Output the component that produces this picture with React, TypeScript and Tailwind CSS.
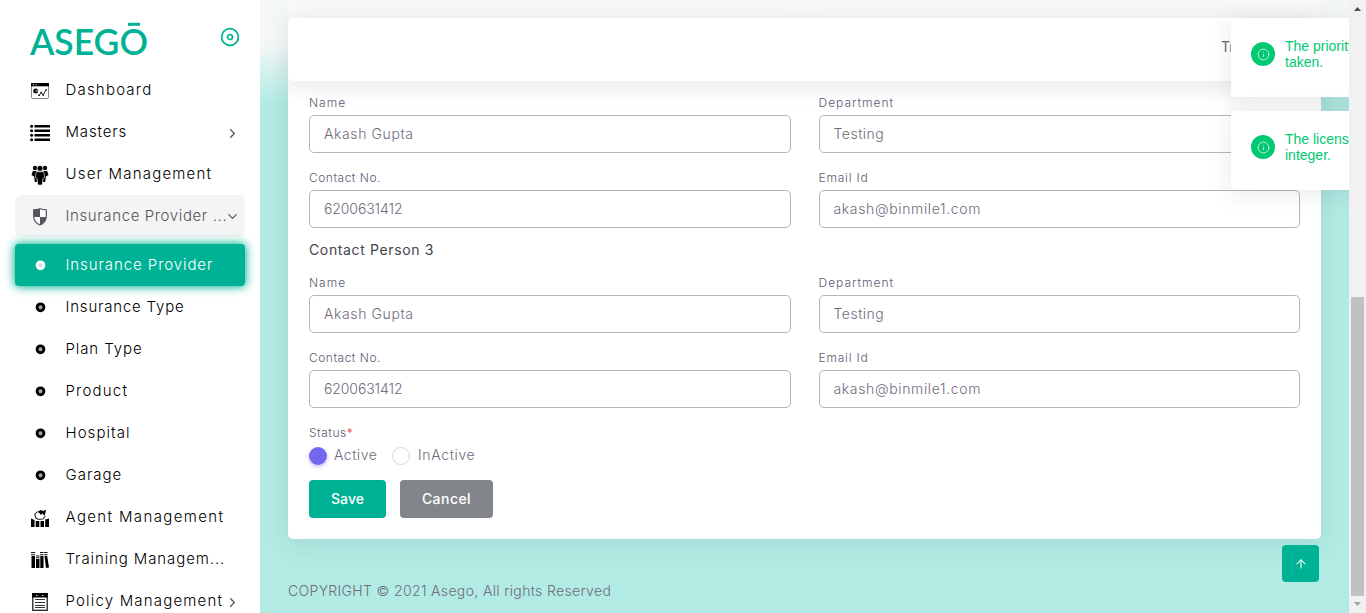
import type { ReactNode } from "react";
import { ArrowUp, ChevronDown, ChevronRight, Info } from "lucide-react";

function Logo() {
  return (
    <svg width="122" height="40" viewBox="0 0 122 40" fill="#00b295">
      <text x="0" y="36" fontFamily="Lato, sans-serif" fontSize="36" fontWeight="600" textLength="118" lengthAdjust="spacingAndGlyphs">
        ASEGO
      </text>
      <rect x="98" y="3.8" width="12" height="3" />
    </svg>
  );
}

function DiscIcon() {
  return (
    <svg width="20" height="20" viewBox="0 0 20 20" fill="none" stroke="#00b295" strokeWidth="1.7" className="mt-2">
      <circle cx="10" cy="10" r="8.400" />
      <circle cx="10" cy="10" r="2.500" />
    </svg>
  );
}

function DashboardIcon() {
  return (
    <svg width="20" height="20" viewBox="0 0 20 20">
      <rect x="1.5" y="2.5" width="17" height="15" rx="1" fill="#fff" stroke="#888" />
      <rect x="1" y="2" width="18" height="3.3" fill="#000" />
      <path d="M3 3.7h1M5.5 3.7h1" stroke="#fff" />
      <circle cx="5.7" cy="10" r="2.5" fill="#111" />
      <path d="M5.7 10h2.6" stroke="#fff" strokeWidth=".8" />
      <path d="M9 14.5l2.3-3 1.800 2.500L16 9" fill="none" stroke="#111" strokeWidth=".9" />
      <path d="M8.300 13.500h1.500V15H8.300zM10.500 10.800H12v1.500h-1.500zM12.500 13.200H14v1.500h-1.500zM15.300 8.300h1.500v1.500h-1.500z" fill="#111" />
    </svg>
  );
}

function ListIcon() {
  return (
    <svg width="20" height="20" viewBox="0 0 20 20">
      <path d="M4.500 2h15.500v2.500H4.500zM4.500 6.500h15.500V9H4.500zM4.500 11h15.500v2.500H4.500zM4.500 15.500h15.500V18H4.500z" />
      <circle cx="1.600" cy="3.250" r="1.500" />
      <circle cx="1.600" cy="7.750" r="1.500" />
      <circle cx="1.600" cy="12.250" r="1.500" />
      <circle cx="1.600" cy="16.750" r="1.500" />
    </svg>
  );
}

function PeopleIcon() {
  return (
    <svg width="20" height="20" viewBox="0 0 20 20">
      <circle cx="5" cy="3" r="2.200" />
      <circle cx="15" cy="3" r="2.200" />
      <path d="M2.800 6h4.400v11H4.800l-.7-5.500L1.500 10zM17.200 6h-4.400v11h2.400l.7-5.500 2.600-1.500z" />
      <circle cx="10" cy="3.400" r="2.900" stroke="#fff" strokeWidth=".6" />
      <path d="M6.300 6.700h7.400l1 6-1.700.6-.8 6.700H7.800L7 13.300l-1.700-.6z" stroke="#fff" strokeWidth=".6" />
    </svg>
  );
}

function ShieldIcon() {
  return (
    <svg width="20" height="20" viewBox="0 0 20 20">
      <path d="M10 1.700c2.200.8 4.200 1.100 6.300 1.100v6.400c0 4.200-2.500 7-6.300 8.800-3.800-1.800-6.300-4.600-6.300-8.800V2.800c2.100 0 4.100-.3 6.300-1.100z" fill="#fff" stroke="#565360" strokeWidth="1.200" />
      <path d="M10 1.700V10H3.700V2.800c2.100 0 4.100-.3 6.300-1.100zM10 10h6.200c-.3 3.800-2.600 6.300-6.200 8z" fill="#565360" />
    </svg>
  );
}

function DotIcon({ light = false }: { light?: boolean }) {
  return (
    <svg width="20" height="20" viewBox="0 0 20 20">
      <circle cx="10.500" cy="9.300" r="3.400" fill={light ? "#b8e8df" : "#aaa"} stroke={light ? "#fff" : "#000"} strokeWidth="2.900" />
    </svg>
  );
}

function AgentIcon() {
  return (
    <svg width="20" height="20" viewBox="0 0 20 20">
      <path d="M1 10.500l3.500 1.500v7H1zM5.700 13h3.600v6H5.700zM10.500 13H14v6h-3.500zM15.200 11.500L19 10.500V19h-3.800z" />
      <path d="M7.500 3.500L4.800 6.500l1 3.500 3 1.500 4-.5 2.500-3" fill="none" stroke="#333" strokeWidth="1.100" />
      <path d="M7.500 4l3-2 3 1L16 1.500l-.5 3-1 3.500-2-2.500-2 1.500-1-2z" />
    </svg>
  );
}

function BooksIcon() {
  return (
    <svg width="20" height="20" viewBox="0 0 20 20">
      <path d="M1.500 6H5v12H1.500zM6 9h3.500v9H6zM10.300 6h3.200v12h-3.200zM14.500 6h2.700L19 17.500l-3 .5z" />
      <path d="M1 2.500h4M1 4.700h4M6 6h3.500M6 7.700h3.500M10 2.500h3.500M10 4.700h3.500M14.200 2.500h3.300M14.200 4.700h3.300" stroke="#111" strokeWidth="1.100" />
    </svg>
  );
}

function DocumentIcon() {
  return (
    <svg width="20" height="20" viewBox="0 0 20 20">
      <rect x="2.800" y="1.800" width="14.400" height="16.500" fill="#fff" stroke="#222" strokeWidth="1.300" />
      <path d="M2 1h16v4.500H2z" />
      <path d="M6 3.500h1.500M12 3.500h1.500" stroke="#fff" strokeWidth=".8" />
      <path d="M5 7.500h10M5 10.500h10M5 13.500h10M5 15.500h10" stroke="#333" />
    </svg>
  );
}

type Item = {
  label: string;
  tracking: string;
  icon: ReactNode;
  arrow?: "right" | "down";
  state?: "open" | "active";
};

const items: Item[] = [
  { label: "Dashboard", tracking: "tracking-[1.2px]", icon: <DashboardIcon /> },
  { label: "Masters", tracking: "tracking-[0.85px]", icon: <ListIcon />, arrow: "right" },
  { label: "User Management", tracking: "tracking-[1.2px]", icon: <PeopleIcon /> },
  { label: "Insurance Provider ...", tracking: "tracking-[0.62px]", icon: <ShieldIcon />, arrow: "down", state: "open" },
  { label: "Insurance Provider", tracking: "tracking-[0.92px]", icon: <DotIcon light />, state: "active" },
  { label: "Insurance Type", tracking: "tracking-[0.8px]", icon: <DotIcon /> },
  { label: "Plan Type", tracking: "tracking-[0.9px]", icon: <DotIcon /> },
  { label: "Product", tracking: "tracking-[1.2px]", icon: <DotIcon /> },
  { label: "Hospital", tracking: "tracking-[1.05px]", icon: <DotIcon /> },
  { label: "Garage", tracking: "tracking-[1px]", icon: <DotIcon /> },
  { label: "Agent Management", tracking: "tracking-[1.37px]", icon: <AgentIcon /> },
  { label: "Training Managem...", tracking: "tracking-[0.9px]", icon: <BooksIcon /> },
  { label: "Policy Management", tracking: "tracking-[1.18px]", icon: <DocumentIcon />, arrow: "right" },
];

function NavItem({ label, tracking, icon, arrow, state }: Item) {
  const look =
    state === "active"
      ? "mt-[7px] rounded bg-[#00b295] text-white shadow-[0_0_10px_1px_#00b295]"
      : state === "open"
        ? "rounded-md bg-[#f4f4f4] text-[#565360]"
        : "text-black";
  return (
    <li className={`flex h-[42px] shrink-0 items-center pr-[5px] pl-[15px] ${look}`}>
      <span className="mt-[2px] w-[35.5px] shrink-0">{icon}</span>
      <span className={`flex-1 whitespace-nowrap text-[15px] font-light ${tracking}`}>{label}</span>
      {arrow === "right" && <ChevronRight size={15} className="mt-[3px] shrink-0 text-[#565360]" />}
      {arrow === "down" && <ChevronDown size={15} className="-ml-2 mt-px shrink-0 text-[#565360]" />}
    </li>
  );
}

function Field({ label, value, labelTracking, tracking }: { label: string; value: string; labelTracking: string; tracking: string }) {
  return (
    <div className="mb-[18px] flex-1">
      <div className={`mb-[5px] text-xs leading-[14px] font-[350] text-[#5e5873] ${labelTracking}`}>{label}</div>
      <div className={`flex h-[38px] items-center rounded-[5px] border border-[#b5b5b8] bg-white px-3.5 text-sm font-[350] text-[#6e6b7b] ${tracking}`}>
        {value}
      </div>
    </div>
  );
}

function NameRow() {
  return (
    <div className="flex gap-7">
      <Field label="Name" value="Akash Gupta" labelTracking="tracking-[1px]" tracking="tracking-[0.6px]" />
      <Field label="Department" value="Testing" labelTracking="tracking-[1px]" tracking="tracking-[0.5px]" />
    </div>
  );
}

function ContactRow() {
  return (
    <div className="flex gap-7">
      <Field label="Contact No." value="6200631412" labelTracking="tracking-[0.5px]" tracking="tracking-[-0.1px]" />
      <Field label="Email Id" value="akash@binmile1.com" labelTracking="tracking-[0.8px]" tracking="tracking-[0.64px]" />
    </div>
  );
}

function PersonHeading({ n }: { n: number }) {
  return <h4 className="-mt-[5px] mb-[18px] text-sm leading-[17px] font-normal tracking-[0.63px] text-[#46424f]">Contact Person {n}</h4>;
}

function Toast({ first, second }: { first: string; second: string }) {
  return (
    <div className="flex h-[79px] w-80 rounded bg-white pt-5 pl-5 shadow-[0_4px_24px_rgba(34,41,47,0.1)]">
      <span className="mt-1 flex size-6 shrink-0 items-center justify-center rounded-full bg-[#00c972]">
        <Info size={13} strokeWidth={1.7} className="text-[#c9f7e1]" />
      </span>
      <p className="ml-2.5 font-['Liberation_Sans',sans-serif] text-sm leading-4 whitespace-nowrap text-[#00c972]">
        {first}
        <br />
        {second}
      </p>
    </div>
  );
}

export default function App() {
  return (
    <div className="flex h-[613px] w-[1366px] overflow-hidden bg-white font-['Inter',sans-serif]">
      <aside className="flex w-[260px] shrink-0 flex-col overflow-hidden bg-white">
        <div className="flex h-[69px] shrink-0 items-start justify-between pt-[19px] pr-5 pl-[30px]">
          <Logo />
          <DiscIcon />
        </div>
        <ul className="flex flex-col px-[15px]">
          {items.map((item) => (
            <NavItem key={item.label} {...item} />
          ))}
        </ul>
      </aside>

      <main className="relative h-full w-[1089px] shrink-0 overflow-hidden bg-[#b2ebe4] px-7">
        <section className="-mt-[9px] h-[548px] rounded-[5px] bg-white px-[21px] shadow-[0_4px_24px_rgba(34,41,47,0.1)]">
          <ContactRow />
          <PersonHeading n={2} />
          <NameRow />
          <ContactRow />
          <PersonHeading n={3} />
          <NameRow />
          <ContactRow />
          <div className="text-xs leading-[14px] font-[350] tracking-[0.5px] text-[#5e5873]">
            Status<span className="text-red-500">*</span>
          </div>
          <div className="mt-[7px] flex h-[18px] items-center text-sm font-[350] text-[#6e6b7b]">
            <span className="size-[18px] rounded-full bg-[#7367f0] shadow-[0_2px_4px_rgba(115,103,240,0.4)]" />
            <span className="mr-3.5 -mt-[3px] ml-[7px] w-11 tracking-[0.5px]">Active</span>
            <span className="size-[18px] rounded-full border border-[#d8d6de]" />
            <span className="-mt-[3px] ml-2 tracking-[0.65px]">InActive</span>
          </div>
          <div className="mt-[15px] flex gap-3.5 text-sm font-medium text-white">
            <div className="flex h-[38px] w-[77px] items-center justify-center rounded bg-[#00b295] tracking-[0.1px]">Save</div>
            <div className="flex h-[38px] w-[93px] items-center justify-center rounded bg-[#82868b] tracking-[0.45px]">Cancel</div>
          </div>
        </section>
        <footer className="pt-[42px] text-sm leading-5 font-[350] tracking-[0.35px] text-[#6e6b7b]">
          COPYRIGHT © 2021 Asego, All rights Reserved
        </footer>

        <div className="absolute inset-x-0 top-0 h-[102px] bg-[linear-gradient(180deg,rgba(248,248,248,0.95)_44%,rgba(248,248,248,0.46)_73%,rgba(255,255,255,0))]" />
        <header className="absolute top-[18px] right-7 left-7 flex h-[63px] items-center rounded-[5px] bg-white pl-[933px] shadow-[0_4px_24px_rgba(34,41,47,0.1)]">
          <span className="-mt-1.5 text-sm text-[#6e6b7b]">Tr</span>
        </header>
        <div className="absolute top-[18px] left-[971px] flex flex-col gap-3.5">
          <Toast first="The priority" second="taken." />
          <Toast first="The license" second="integer." />
        </div>
        <div className="absolute top-[545px] left-[1022px] flex size-[37px] items-center justify-center rounded bg-[#00b295] text-white">
          <ArrowUp size={14} strokeWidth={1.8} />
        </div>
      </main>

      <div className="flex w-[17px] shrink-0 flex-col items-center bg-[#f1f1f1]">
        <svg width="17" height="297" viewBox="0 0 17 297">
          <path d="M5 11h7L8.500 7z" fill="#505050" />
        </svg>
        <div className="h-[299px] w-[13px] bg-[#c1c1c1]" />
        <svg width="17" height="17" viewBox="0 0 17 17">
          <path d="M5 6h7l-3.500 4z" fill="#a3a3a3" />
        </svg>
      </div>
    </div>
  );
}
